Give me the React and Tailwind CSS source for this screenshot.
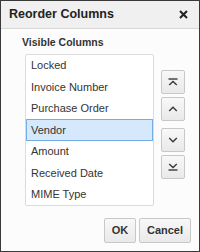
import React from 'react';

const columns = [
  'Locked',
  'Invoice Number',
  'Purchase Order',
  'Vendor',
  'Amount',
  'Received Date',
  'MIME Type'
];

const font = { fontFamily: '"Liberation Sans", Arial, sans-serif' };

const MoveIcon = ({ kind }) => (
  <svg width="10" height="8" viewBox="0 0 10 8" fill="none" stroke="#3a3a3a" strokeWidth="1.4">
    {kind === 'top' && (
      <>
        <path d="M0.5 1H9.5" />
        <path d="M1.2 7L5 3.4L8.8 7" />
      </>
    )}
    {kind === 'up' && <path d="M1.2 6L5 2.2L8.8 6" />}
    {kind === 'down' && <path d="M1.2 2L5 5.8L8.8 2" />}
    {kind === 'bottom' && (
      <>
        <path d="M1.2 1L5 4.6L8.8 1" />
        <path d="M0.5 7H9.5" />
      </>
    )}
  </svg>
);

const SideButton = ({ kind }) => (
  <button className="w-[24px] h-[24px] flex items-center justify-center rounded-[2px] border border-[#c8c8c8] bg-gradient-to-b from-[#f8f8f8] to-[#e9e9e9]">
    <MoveIcon kind={kind} />
  </button>
);

export default function App() {
  return (
    <div
      style={font}
      className="w-[200px] h-[252px] box-border border border-[#3a3a3a] bg-[#fcfcfc] flex flex-col text-[#333]"
    >
      {/* Titlebar */}
      <div className="h-[28px] shrink-0 flex items-center justify-between pl-[8px] pr-[11px] bg-[#f0f0f0] border-b border-[#d8d8d8]">
        <span className="text-[12.5px] font-bold text-[#222] leading-none">Reorder Columns</span>
        <svg width="9" height="9" viewBox="0 0 9 9" stroke="#222" strokeWidth="2.1">
          <path d="M1 1L8 8M8 1L1 8" />
        </svg>
      </div>

      {/* Body */}
      <div className="pl-[21px] pt-[7px]">
        <div className="text-[10.5px] font-bold leading-[13px] text-[#333]">Visible Columns</div>
        <div className="flex mt-[5px] ml-[3px]">
          <div className="w-[129px] h-[152px] border border-[#dcdcdc] rounded-[2px] bg-white flex flex-col">
            {columns.map((c) => (
              <div
                key={c}
                className={
                  c === 'Vendor'
                    ? 'flex-1 flex items-center pl-[4px] text-[11px] border border-[#74aee8] bg-[#d6e8fb]'
                    : 'flex-1 flex items-center pl-[4px] text-[11px] border border-transparent'
                }
              >
                {c}
              </div>
            ))}
          </div>
          <div className="ml-[7px] mt-[16px] flex flex-col">
            <SideButton kind="top" />
            <div className="mt-[3px]">
              <SideButton kind="up" />
            </div>
            <div className="mt-[7px]">
              <SideButton kind="down" />
            </div>
            <div className="mt-[3px]">
              <SideButton kind="bottom" />
            </div>
          </div>
        </div>
      </div>

      {/* Footer */}
      <div className="flex justify-end gap-[3px] pr-[8px] mt-[12px]">
        <button className="w-[32px] h-[25px] rounded-[2px] border border-[#c8c8c8] bg-gradient-to-b from-[#f8f8f8] to-[#e9e9e9] text-[11px] font-bold text-[#333]">
          OK
        </button>
        <button className="w-[52px] h-[25px] rounded-[2px] border border-[#c8c8c8] bg-gradient-to-b from-[#f8f8f8] to-[#e9e9e9] text-[11px] font-bold text-[#333]">
          Cancel
        </button>
      </div>
    </div>
  );
}
